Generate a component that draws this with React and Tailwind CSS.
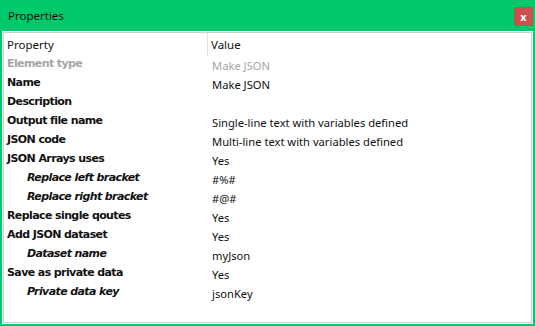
import React from 'react';

const rows = [
    { name: 'Element type', value: 'Make JSON', muted: true },
    { name: 'Name', value: 'Make JSON' },
    { name: 'Description', value: '' },
    { name: 'Output file name', value: 'Single-line text with variables defined' },
    { name: 'JSON code', value: 'Multi-line text with variables defined' },
    { name: 'JSON Arrays uses', value: 'Yes' },
    { name: 'Replace left bracket', value: '#%#', sub: true },
    { name: 'Replace right bracket', value: '#@#', sub: true },
    { name: 'Replace single qoutes', value: 'Yes' },
    { name: 'Add JSON dataset', value: 'Yes' },
    { name: 'Dataset name', value: 'myJson', sub: true },
    { name: 'Save as private data', value: 'Yes' },
    { name: 'Private data key', value: 'jsonKey', sub: true },
];

const App = () => {
    return (
        <div className="w-[535px] h-[326px] bg-[#00c96b] flex flex-col px-[2px] pb-[2px] font-['Noto_Sans',sans-serif]">
            {/* title bar */}
            <div className="h-[31px] flex items-center justify-between pl-[6px] shrink-0">
                <span className="text-[11.5px] text-[#111]">Properties</span>
                <button className="w-[19px] h-[19px] mt-[2px] bg-[#c9504f] text-white text-[11px] font-bold leading-none flex items-center justify-center">
                    x
                </button>
            </div>

            {/* grid */}
            <div className="flex-1 bg-white p-[1px]">
                <div className="h-full border border-[#cfcfcf] bg-white">
                    <div className="flex h-[23px] items-center text-[11.5px] text-[#111]">
                        <div className="w-[204px] pl-[3px] border-r border-[#e2e2e2] h-full flex items-center pt-[1px]">Property</div>
                        <div className="pl-[3px] pt-[1px]">Value</div>
                    </div>
                    {rows.map((row, i) => (
                        <div key={i} className="flex h-[19px]">
                            <div
                                className={`w-[205px] text-[11px] font-bold font-['DejaVu_Sans',sans-serif] tracking-[-0.6px] ${row.sub ? 'pl-[23px] italic' : 'pl-[3px]'} ${row.muted ? 'text-[#a6a6a6]' : 'text-[#111]'}`}
                            >
                                {row.name}
                            </div>
                            <div className={`pl-[3px] pt-[2px] text-[11.2px] ${row.muted ? 'text-[#a6a6a6]' : 'text-[#111]'}`}>
                                {row.value}
                            </div>
                        </div>
                    ))}
                </div>
            </div>
        </div>
    );
};

export default App;
